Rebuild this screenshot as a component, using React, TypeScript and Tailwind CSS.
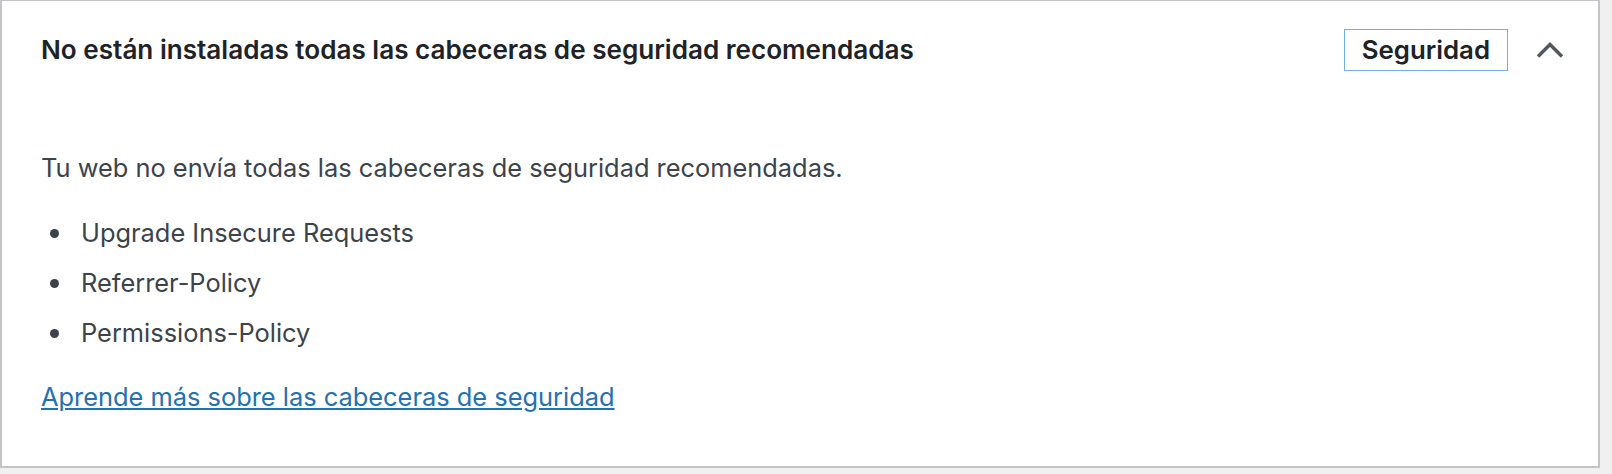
import React from 'react'

const headers = ['Upgrade Insecure Requests', 'Referrer-Policy', 'Permissions-Policy']

const App = () => {
  return (
    <div className="w-full h-[474px] bg-[#f0f0f1] font-['Inter',sans-serif]">
      <div className="w-[1600px] h-[468px] bg-white border-t border-l-2 border-r-2 border-b-2 border-[#c3c4c7]">
        <div className="flex items-center h-[97px] pl-[39px] pr-[34px]">
          <h2 className="flex-1 text-[26.1px] leading-[30px] font-semibold text-[#1d2327]">
            No están instaladas todas las cabeceras de seguridad recomendadas
          </h2>
          <span className="h-[42px] px-[17px] py-[5px] border border-[#72aee6] text-[25.8px] leading-[30px] font-semibold text-[#1d2327]">
            Seguridad
          </span>
          <button className="ml-[28px] w-[28px] h-[16px] flex items-center justify-center">
            <svg width="28" height="16" viewBox="0 0 28 16" fill="none">
              <polyline points="2,14.5 14,2.5 26,14.5" stroke="#50575e" strokeWidth="3.4" />
            </svg>
          </button>
        </div>
        <div className="pl-[39px] pt-[55px] text-[25.4px] leading-[30px] text-[#3c434a]">
          <p>Tu web no envía todas las cabeceras de seguridad recomendadas.</p>
          <ul className="mt-[35px] flex flex-col gap-5">
            {headers.map((h) => (
              <li key={h} className="flex items-center">
                <span className="w-[9px] h-[9px] rounded-full bg-[#3c434a] ml-[9px] mr-[22px]" />
                {h}
              </li>
            ))}
          </ul>
          <a href="#" className="block mt-[34px] w-fit text-[#2271b1] underline underline-offset-2">
            Aprende más sobre las cabeceras de seguridad
          </a>
        </div>
      </div>
    </div>
  )
}

export default App
